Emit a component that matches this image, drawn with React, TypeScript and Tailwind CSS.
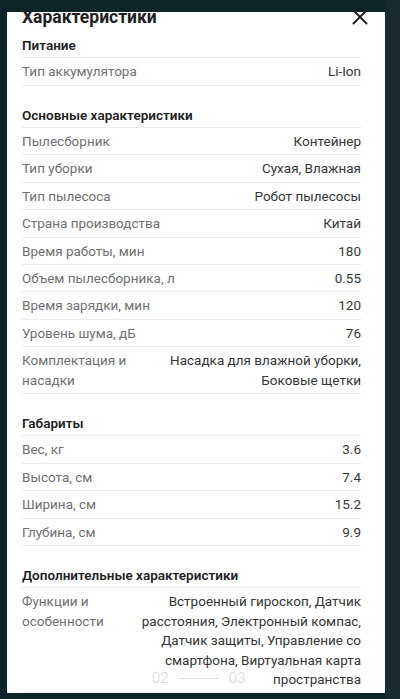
import React from "react";

type Row = { label: string; value: string; multi?: boolean };
type Section = { title: string; rows: Row[] };

const sections: Section[] = [
  { title: "Питание", rows: [{ label: "Тип аккумулятора", value: "Li-Ion" }] },
  {
    title: "Основные характеристики",
    rows: [
      { label: "Пылесборник", value: "Контейнер" },
      { label: "Тип уборки", value: "Сухая, Влажная" },
      { label: "Тип пылесоса", value: "Робот пылесосы" },
      { label: "Страна производства", value: "Китай" },
      { label: "Время работы, мин", value: "180" },
      { label: "Объем пылесборника, л", value: "0.55" },
      { label: "Время зарядки, мин", value: "120" },
      { label: "Уровень шума, дБ", value: "76" },
      { label: "Комплектация и насадки", value: "Насадка для влажной уборки, Боковые щетки", multi: true },
    ],
  },
  {
    title: "Габариты",
    rows: [
      { label: "Вес, кг", value: "3.6" },
      { label: "Высота, см", value: "7.4" },
      { label: "Ширина, см", value: "15.2" },
      { label: "Глубина, см", value: "9.9" },
    ],
  },
  {
    title: "Дополнительные характеристики",
    rows: [
      {
        label: "Функции и особенности",
        value:
          "Встроенный гироскоп, Датчик расстояния, Электронный компас, Датчик защиты, Управление со смартфона, Виртуальная карта пространства",
        multi: true,
      },
    ],
  },
];

export default function App() {
  return (
    <div
      className="w-[400px] h-[699px] bg-[#0e2528] overflow-hidden flex"
      style={{ fontFamily: "Roboto, 'Noto Sans', sans-serif" }}
    >
      <div className="ml-[7px] mt-[12px] w-[378px] h-[681px] bg-white overflow-hidden relative">
        <div className="-mt-[9px] pl-[15px] pr-[24px]">
          <div className="flex items-start justify-between h-[32px]">
            <div className="text-[17.5px] leading-[26px] font-bold text-[#1e1e1e] mt-[1px]">
              Характеристики
            </div>
            <svg width="16" height="16" viewBox="0 0 16 16" className="mt-[6px] mr-[-7px]">
              <path d="M1.5 1.5 L14.5 14.5 M14.5 1.5 L1.5 14.5" stroke="#222" strokeWidth="2" strokeLinecap="round" />
            </svg>
          </div>
          {sections.map((s, i) => (
            <div key={s.title} className={i === 0 ? "mt-[1px]" : "mt-[20px]"}>
              <div className="border-b border-[#ececec] pb-[2px] text-[13.5px] leading-[19.3px] font-semibold text-[#222]">
                {s.title}
              </div>
              {s.rows.map((r) => (
                <div
                  key={r.label}
                  className="flex justify-between border-b border-[#ececec] pt-[4px] pb-[3px] text-[13.5px] leading-[19.4px]"
                >
                  <div className={r.multi ? "flex-1 text-[#707070]" : "text-[#707070]"}>{r.label}</div>
                  <div className={r.multi ? "w-[225px] text-right text-[#363636]" : "text-right text-[#363636]"}>
                    {r.value}
                  </div>
                </div>
              ))}
            </div>
          ))}
        </div>
        <div className="absolute left-[145px] top-[655px] flex items-center gap-[10px] text-[15px] font-light text-[#d6d6d6]">
          <span>02</span>
          <span className="block w-[40px] h-px bg-[#e0e0e0]" />
          <span>03</span>
        </div>
      </div>
      <div className="w-[15px] h-full bg-[#162c2f]" />
    </div>
  );
}
